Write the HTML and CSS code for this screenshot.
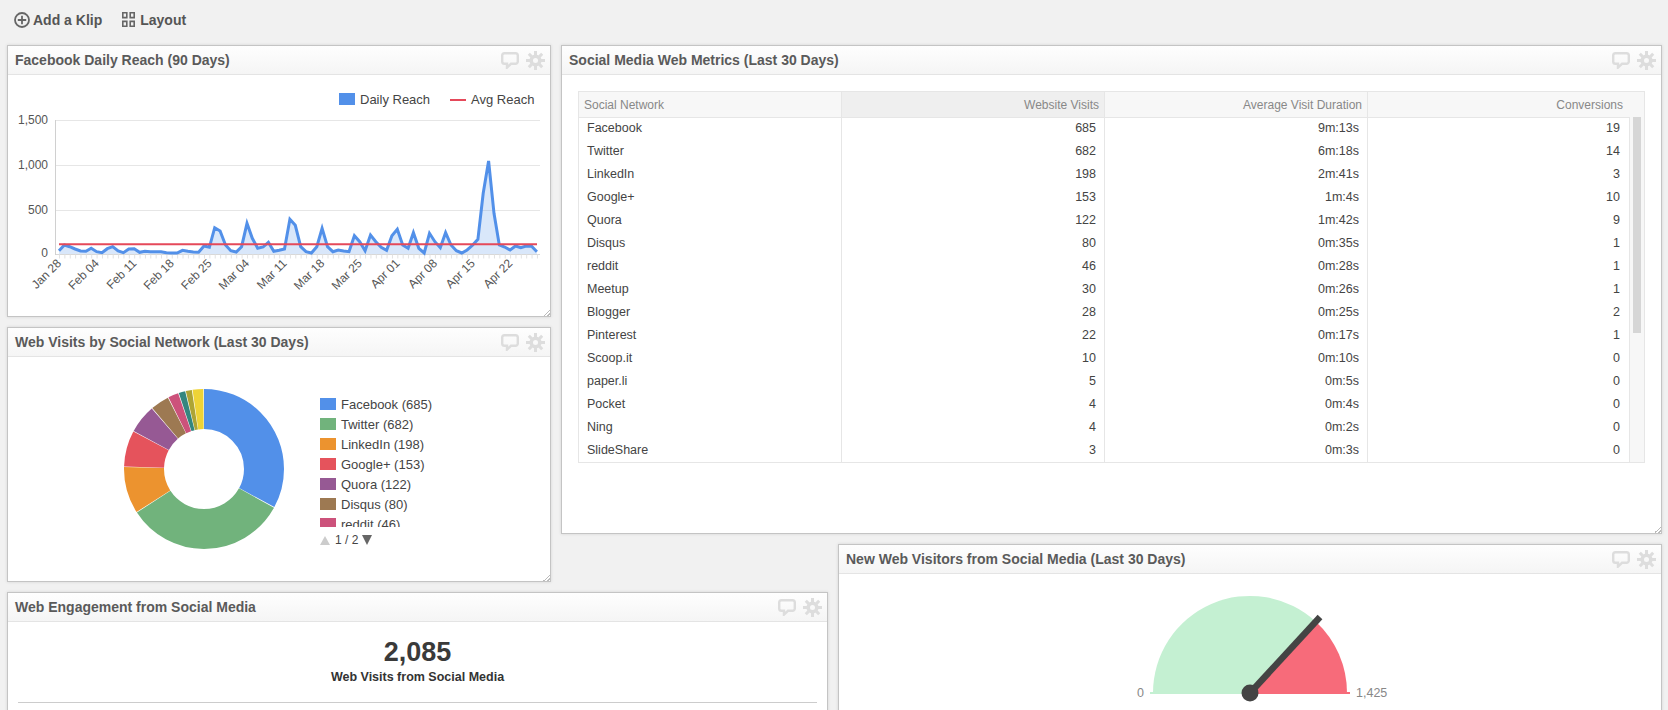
FILE: index.html
```html
<html>
<head>
  <title>Dashboard</title>
  <link rel="stylesheet" href="styles.css">
</head>
<body>
  <!-- Toolbar -->
  <div class="toolbar">
    <a class="tool">
      <svg class="tool-icon" width="16" height="16" viewBox="0 0 16 16"><circle cx="8" cy="8" r="7" fill="none" stroke="#666" stroke-width="1.800"/><path d="M8 3.800v8.400M3.800 8h8.400" stroke="#666" stroke-width="1.800"/></svg>
      Add a Klip
    </a>
    <a class="tool">
      <svg class="tool-icon" width="13" height="15" viewBox="0 0 13 15"><path d="M.8.800h4v4.800h-4zM8.200.800h4v4.800h-4zM.8 9.400h4v4.800h-4zM8.200 9.400h4v4.800h-4z" fill="none" stroke="#666" stroke-width="1.600"/></svg>
      Layout
    </a>
  </div>

  <div class="dashboard">

    <!-- Facebook reach chart -->
    <section class="klip klip-reach">
      <div class="klip-header">
        <h2>Facebook Daily Reach (90 Days)</h2>
        <svg class="klip-icon" width="18" height="17" viewBox="0 0 18 17"><path d="M3.500 1.200h11a2.300 2.300 0 0 1 2.300 2.300v6a2.300 2.300 0 0 1-2.300 2.300H10l-4 3.800v-3.800H3.500a2.300 2.300 0 0 1-2.300-2.300v-6a2.300 2.300 0 0 1 2.300-2.300z" fill="none" stroke="#ddd" stroke-width="2.400"/></svg>
        <svg class="klip-icon" width="19" height="19" viewBox="0 0 19 19"><circle cx="9.500" cy="9.500" r="4.300" fill="none" stroke="#ddd" stroke-width="3.600"/><path d="M9.500 0v19M0 9.500h19M2.800 2.800l13.400 13.400M16.200 2.800L2.800 16.200" stroke="#ddd" stroke-width="3" stroke-dasharray="4 11 4"/></svg>
      </div>
      <div class="klip-body">
        <svg class="chart" width="541" height="241" viewBox="8 75 541 241">
          <!-- legend -->
          <rect x="339" y="93" width="16" height="12" fill="#5290e9"/>
          <text class="legend-text" x="360" y="104">Daily Reach</text>
          <rect x="450" y="99" width="16" height="2" fill="#e5495a"/>
          <text class="legend-text" x="471" y="104">Avg Reach</text>

          <!-- grid -->
          <path d="M56 120.500h484M56 165.500h484M56 210.500h484" stroke="#e6e6e6" fill="none"/>
          <path d="M55.500 120v135" stroke="#d0d0d0" fill="none"/>
          <path d="M56 254.500h484" stroke="#d8d8d8" fill="none"/>
          <text class="axis-y" x="48" y="124">1,500</text>
          <text class="axis-y" x="48" y="169">1,000</text>
          <text class="axis-y" x="48" y="214">500</text>
          <text class="axis-y" x="48" y="257">0</text>
          <path stroke="#e2e2e2" stroke-dasharray="1 4.370" d="M59 256.500h480" stroke-width="4" fill="none"/>

          <!-- series -->
          <polygon fill="#5290e9" fill-opacity=".22" points="59,254 59,250.700 64.400,245 69.700,246.700 75.100,249 80.500,251 85.900,251.300 91.200,248.300 96.600,251.700 102,252.700 107.300,248.700 112.700,246.700 118.100,251 123.400,252.700 128.800,249 134.200,248.700 139.600,252.300 144.900,251.300 150.300,251.700 155.700,251.700 161,251.700 166.400,252.700 171.800,253 177.100,253 182.500,250.300 187.900,251.300 193.300,252 198.600,252.300 204,246 209.400,247.300 214.700,227.700 220.100,231 225.500,245 230.800,250.700 236.200,252 241.600,246.700 247,223.300 252.300,238.300 257.700,248.300 263.100,247 268.400,242.300 273.800,251.300 279.200,250.300 284.500,249 289.900,219.300 295.300,225.300 300.700,246.700 306,251.700 311.400,253 316.800,246.700 322.100,228.300 327.500,246.700 332.900,251.700 338.200,250 343.600,251 349,251.700 354.400,235.700 359.700,241.700 365.100,250.700 370.500,235 375.800,241.700 381.200,247.300 386.600,250.300 391.900,235.700 397.300,229.300 402.700,245 408.100,248.300 413.400,232.700 418.800,248.300 424.200,253 429.500,233.300 434.900,241.700 440.300,247.700 445.600,232.700 451,245 456.400,250.700 461.800,253 467.100,250 472.500,245.300 477.900,239.300 483.200,193.300 488.600,161 494,213.300 499.300,245 504.700,247 510.100,250 515.500,246 520.800,247.700 526.200,246 531.600,246.300 536.900,251.700 536.900,254"/>
          <polyline fill="none" stroke="#5290e9" stroke-width="3" stroke-linejoin="miter" points="59,250.700 64.400,245 69.700,246.700 75.100,249 80.500,251 85.900,251.300 91.200,248.300 96.600,251.700 102,252.700 107.300,248.700 112.700,246.700 118.100,251 123.400,252.700 128.800,249 134.200,248.700 139.600,252.300 144.900,251.300 150.300,251.700 155.700,251.700 161,251.700 166.400,252.700 171.800,253 177.100,253 182.500,250.300 187.900,251.300 193.300,252 198.600,252.300 204,246 209.400,247.300 214.700,227.700 220.100,231 225.500,245 230.800,250.700 236.200,252 241.600,246.700 247,223.300 252.300,238.300 257.700,248.300 263.100,247 268.400,242.300 273.800,251.300 279.200,250.300 284.500,249 289.900,219.300 295.300,225.300 300.700,246.700 306,251.700 311.400,253 316.800,246.700 322.100,228.300 327.500,246.700 332.900,251.700 338.200,250 343.600,251 349,251.700 354.400,235.700 359.700,241.700 365.100,250.700 370.500,235 375.800,241.700 381.200,247.300 386.600,250.300 391.900,235.700 397.300,229.300 402.700,245 408.100,248.300 413.400,232.700 418.800,248.300 424.200,253 429.500,233.300 434.900,241.700 440.300,247.700 445.600,232.700 451,245 456.400,250.700 461.800,253 467.100,250 472.500,245.300 477.900,239.300 483.200,193.300 488.600,161 494,213.300 499.300,245 504.700,247 510.100,250 515.500,246 520.800,247.700 526.200,246 531.600,246.300 536.900,251.700"/>
          <path d="M59 244.300h478" stroke="#e5495a" stroke-width="2" fill="none"/>

          <!-- date labels -->
          <text class="axis-x" transform="translate(62 264) rotate(-45)">Jan 28</text>
          <text class="axis-x" transform="translate(99.600 264) rotate(-45)">Feb 04</text>
          <text class="axis-x" transform="translate(137.200 264) rotate(-45)">Feb 11</text>
          <text class="axis-x" transform="translate(174.800 264) rotate(-45)">Feb 18</text>
          <text class="axis-x" transform="translate(212.400 264) rotate(-45)">Feb 25</text>
          <text class="axis-x" transform="translate(250 264) rotate(-45)">Mar 04</text>
          <text class="axis-x" transform="translate(287.600 264) rotate(-45)">Mar 11</text>
          <text class="axis-x" transform="translate(325.200 264) rotate(-45)">Mar 18</text>
          <text class="axis-x" transform="translate(362.800 264) rotate(-45)">Mar 25</text>
          <text class="axis-x" transform="translate(400.400 264) rotate(-45)">Apr 01</text>
          <text class="axis-x" transform="translate(438 264) rotate(-45)">Apr 08</text>
          <text class="axis-x" transform="translate(475.600 264) rotate(-45)">Apr 15</text>
          <text class="axis-x" transform="translate(513.200 264) rotate(-45)">Apr 22</text>
        </svg>
      </div>
      <span class="resize-handle"></span>
    </section>

    <!-- Visits donut -->
    <section class="klip klip-donut">
      <div class="klip-header">
        <h2>Web Visits by Social Network (Last 30 Days)</h2>
        <svg class="klip-icon" width="18" height="17" viewBox="0 0 18 17"><path d="M3.500 1.200h11a2.300 2.300 0 0 1 2.300 2.300v6a2.300 2.300 0 0 1-2.300 2.300H10l-4 3.800v-3.800H3.500a2.300 2.300 0 0 1-2.300-2.300v-6a2.300 2.300 0 0 1 2.300-2.300z" fill="none" stroke="#ddd" stroke-width="2.400"/></svg>
        <svg class="klip-icon" width="19" height="19" viewBox="0 0 19 19"><circle cx="9.500" cy="9.500" r="4.300" fill="none" stroke="#ddd" stroke-width="3.600"/><path d="M9.500 0v19M0 9.500h19M2.800 2.800l13.400 13.400M16.200 2.800L2.800 16.200" stroke="#ddd" stroke-width="3" stroke-dasharray="4 11 4"/></svg>
      </div>
      <div class="klip-body donut-body">
        <svg class="donut" width="162" height="162" viewBox="0 0 162 162">
          <g transform="rotate(-90 81 81)" fill="none" stroke-width="40">
            <circle cx="81" cy="81" r="60" pathLength="360" stroke="#5290e9" stroke-dasharray="118.500 360"/>
            <circle cx="81" cy="81" r="60" pathLength="360" stroke="#71b37c" stroke-dasharray="118 360" stroke-dashoffset="-119"/>
            <circle cx="81" cy="81" r="60" pathLength="360" stroke="#ec932f" stroke-dasharray="33.900 360" stroke-dashoffset="-237.500"/>
            <circle cx="81" cy="81" r="60" pathLength="360" stroke="#e5535c" stroke-dasharray="26.100 360" stroke-dashoffset="-271.900"/>
            <circle cx="81" cy="81" r="60" pathLength="360" stroke="#965994" stroke-dasharray="20.700 360" stroke-dashoffset="-298.500"/>
            <circle cx="81" cy="81" r="60" pathLength="360" stroke="#9d7952" stroke-dasharray="13.400 360" stroke-dashoffset="-319.700"/>
            <circle cx="81" cy="81" r="60" pathLength="360" stroke="#cc527b" stroke-dasharray="7.500 360" stroke-dashoffset="-333.600"/>
            <circle cx="81" cy="81" r="60" pathLength="360" stroke="#33867f" stroke-dasharray="4.700 360" stroke-dashoffset="-341.600"/>
            <circle cx="81" cy="81" r="60" pathLength="360" stroke="#ada434" stroke-dasharray="4.400 360" stroke-dashoffset="-346.800"/>
            <circle cx="81" cy="81" r="60" pathLength="360" stroke="#eed336" stroke-dasharray="7.800 360" stroke-dashoffset="-351.700"/>
          </g>
        </svg>
        <div class="donut-side">
          <ul class="donut-legend">
            <li><span class="swatch swatch-facebook"></span>Facebook (685)</li>
            <li><span class="swatch swatch-twitter"></span>Twitter (682)</li>
            <li><span class="swatch swatch-linkedin"></span>LinkedIn (198)</li>
            <li><span class="swatch swatch-google"></span>Google+ (153)</li>
            <li><span class="swatch swatch-quora"></span>Quora (122)</li>
            <li><span class="swatch swatch-disqus"></span>Disqus (80)</li>
            <li><span class="swatch swatch-reddit"></span>reddit (46)</li>
          </ul>
          <div class="pager">
            <span class="arrow-up"></span>
            <span>1 / 2</span>
            <span class="arrow-down"></span>
          </div>
        </div>
      </div>
      <span class="resize-handle"></span>
    </section>

    <!-- Metrics table -->
    <section class="klip klip-metrics">
      <div class="klip-header">
        <h2>Social Media Web Metrics (Last 30 Days)</h2>
        <svg class="klip-icon" width="18" height="17" viewBox="0 0 18 17"><path d="M3.500 1.200h11a2.300 2.300 0 0 1 2.300 2.300v6a2.300 2.300 0 0 1-2.300 2.300H10l-4 3.800v-3.800H3.500a2.300 2.300 0 0 1-2.300-2.300v-6a2.300 2.300 0 0 1 2.300-2.300z" fill="none" stroke="#ddd" stroke-width="2.400"/></svg>
        <svg class="klip-icon" width="19" height="19" viewBox="0 0 19 19"><circle cx="9.500" cy="9.500" r="4.300" fill="none" stroke="#ddd" stroke-width="3.600"/><path d="M9.500 0v19M0 9.500h19M2.800 2.800l13.400 13.400M16.200 2.800L2.800 16.200" stroke="#ddd" stroke-width="3" stroke-dasharray="4 11 4"/></svg>
      </div>
      <div class="klip-body metrics-body">
        <div class="table-wrap">
          <table class="metrics">
            <thead>
              <tr>
                <th class="col-name">Social Network</th>
                <th class="col-visits sorted">Website Visits</th>
                <th class="col-duration">Average Visit Duration</th>
                <th class="col-conv">Conversions</th>
              </tr>
            </thead>
            <tbody>
              <tr><td>Facebook</td><td>685</td><td>9m:13s</td><td>19</td></tr>
              <tr><td>Twitter</td><td>682</td><td>6m:18s</td><td>14</td></tr>
              <tr><td>LinkedIn</td><td>198</td><td>2m:41s</td><td>3</td></tr>
              <tr><td>Google+</td><td>153</td><td>1m:4s</td><td>10</td></tr>
              <tr><td>Quora</td><td>122</td><td>1m:42s</td><td>9</td></tr>
              <tr><td>Disqus</td><td>80</td><td>0m:35s</td><td>1</td></tr>
              <tr><td>reddit</td><td>46</td><td>0m:28s</td><td>1</td></tr>
              <tr><td>Meetup</td><td>30</td><td>0m:26s</td><td>1</td></tr>
              <tr><td>Blogger</td><td>28</td><td>0m:25s</td><td>2</td></tr>
              <tr><td>Pinterest</td><td>22</td><td>0m:17s</td><td>1</td></tr>
              <tr><td>Scoop.it</td><td>10</td><td>0m:10s</td><td>0</td></tr>
              <tr><td>paper.li</td><td>5</td><td>0m:5s</td><td>0</td></tr>
              <tr><td>Pocket</td><td>4</td><td>0m:4s</td><td>0</td></tr>
              <tr><td>Ning</td><td>4</td><td>0m:2s</td><td>0</td></tr>
              <tr><td>SlideShare</td><td>3</td><td>0m:3s</td><td>0</td></tr>
            </tbody>
          </table>
          <div class="scroll-track"><div class="scroll-thumb"></div></div>
        </div>
      </div>
      <span class="resize-handle"></span>
    </section>

    <!-- Gauge -->
    <section class="klip klip-gauge">
      <div class="klip-header">
        <h2>New Web Visitors from Social Media (Last 30 Days)</h2>
        <svg class="klip-icon" width="18" height="17" viewBox="0 0 18 17"><path d="M3.500 1.200h11a2.300 2.300 0 0 1 2.300 2.300v6a2.300 2.300 0 0 1-2.300 2.300H10l-4 3.800v-3.800H3.500a2.300 2.300 0 0 1-2.300-2.300v-6a2.300 2.300 0 0 1 2.300-2.300z" fill="none" stroke="#ddd" stroke-width="2.400"/></svg>
        <svg class="klip-icon" width="19" height="19" viewBox="0 0 19 19"><circle cx="9.500" cy="9.500" r="4.300" fill="none" stroke="#ddd" stroke-width="3.600"/><path d="M9.500 0v19M0 9.500h19M2.800 2.800l13.400 13.400M16.200 2.800L2.800 16.200" stroke="#ddd" stroke-width="3" stroke-dasharray="4 11 4"/></svg>
      </div>
      <div class="klip-body gauge-body">
        <svg class="gauge" width="300" height="130" viewBox="1100 585 300 130">
          <path d="M1153 693A97 97 0 0 1 1316.200 622L1250 693z" fill="#c4f0d2"/>
          <path d="M1316.200 622A97 97 0 0 1 1347 693H1250z" fill="#f76b7a"/>
          <rect x="1150" y="692" width="100" height="2" fill="#c4f0d2"/>
          <rect x="1250" y="692" width="100" height="2" fill="#f76b7a"/>
          <path d="M1250 693L1320 617" stroke="#444" stroke-width="6.500" fill="none"/>
          <circle cx="1250" cy="693" r="8.500" fill="#444"/>
          <text class="gauge-label" x="1144" y="697" text-anchor="end">0</text>
          <text class="gauge-label" x="1356" y="697">1,425</text>
        </svg>
      </div>
    </section>

    <!-- Engagement numbers -->
    <section class="klip klip-engage">
      <div class="klip-header">
        <h2>Web Engagement from Social Media</h2>
        <svg class="klip-icon" width="18" height="17" viewBox="0 0 18 17"><path d="M3.500 1.200h11a2.300 2.300 0 0 1 2.300 2.300v6a2.300 2.300 0 0 1-2.300 2.300H10l-4 3.800v-3.800H3.500a2.300 2.300 0 0 1-2.300-2.300v-6a2.300 2.300 0 0 1 2.300-2.300z" fill="none" stroke="#ddd" stroke-width="2.400"/></svg>
        <svg class="klip-icon" width="19" height="19" viewBox="0 0 19 19"><circle cx="9.500" cy="9.500" r="4.300" fill="none" stroke="#ddd" stroke-width="3.600"/><path d="M9.500 0v19M0 9.500h19M2.800 2.800l13.400 13.400M16.200 2.800L2.800 16.200" stroke="#ddd" stroke-width="3" stroke-dasharray="4 11 4"/></svg>
      </div>
      <div class="klip-body engage-body">
        <div class="big-number">2,085</div>
        <div class="big-label">Web Visits from Social Media</div>
        <hr class="engage-rule">
      </div>
    </section>

  </div>
</body>
</html>
```

FILE: styles.css
```css
/* Page */
html, body {
  height: 100%;
}
body {
  margin: 0;
  background-color: #f1f1f1;
  font-family: "Liberation Sans", Arial, sans-serif;
  color: #444;
  overflow: hidden;
}

/* Toolbar */
.toolbar {
  display: flex;
  align-items: center;
  gap: 20px;
  height: 45px;
  padding: 0 0 6px 14px;
  box-sizing: border-box;
}
.tool {
  display: flex;
  align-items: center;
  gap: 3px;
  font-size: 14px;
  font-weight: bold;
  color: #555;
}
.tool-icon {
  flex: none;
}
.tool + .tool {
  gap: 5px;
}

/* Dashboard grid */
.dashboard {
  display: grid;
  grid-template-columns: 544px 267px 824px;
  grid-template-rows: 272px 207px 38px 200px;
  column-gap: 10px;
  row-gap: 10px;
  padding-left: 7px;
}
.klip-reach { grid-column: 1; grid-row: 1; }
.klip-donut { grid-column: 1; grid-row: 2 / span 2; }
.klip-metrics { grid-column: 2 / span 2; grid-row: 1 / span 2; }
.klip-gauge { grid-column: 3; grid-row: 3 / span 2; }
.klip-engage { grid-column: 1 / span 2; grid-row: 4; }

/* Klip panels */
.klip {
  position: relative;
  display: flex;
  flex-direction: column;
  background-color: #fff;
  border: 1px solid #c4c4c4;
  box-shadow: 0 0 3px rgba(0, 0, 0, 0.12);
  box-sizing: border-box;
  min-width: 0;
  min-height: 0;
}
.klip-header {
  display: flex;
  align-items: center;
  gap: 7px;
  flex: none;
  height: 28px;
  padding: 0 5px 0 7px;
  background: linear-gradient(#fefefe, #f5f5f5);
  border-bottom: 1px solid #e4e4e4;
}
.klip-header h2 {
  flex: 1;
  margin: 0;
  font-size: 14px;
  font-weight: bold;
  color: #5a5a5a;
  white-space: nowrap;
}
.klip-icon {
  flex: none;
}
.klip-body {
  flex: 1;
  min-height: 0;
}
.resize-handle {
  position: absolute;
  right: 0;
  bottom: 0;
  width: 7px;
  height: 7px;
  background: linear-gradient(135deg, transparent 50%, #bbb 50%, #bbb 60%, transparent 60%, transparent 76%, #bbb 76%, #bbb 86%, transparent 86%);
}

/* Reach chart */
.chart {
  display: block;
}
.legend-text {
  font-size: 13px;
  fill: #444;
}
.axis-y {
  font-size: 12px;
  fill: #555;
  text-anchor: end;
}
.axis-x {
  font-size: 12px;
  fill: #555;
  text-anchor: end;
}

/* Donut */
.donut-body {
  display: flex;
  align-items: flex-start;
}
.donut {
  flex: none;
  margin: 31px 0 0 115px;
}
.donut-side {
  margin: 37px 0 0 35px;
  font-size: 13px;
  color: #444;
}
.donut-legend {
  list-style: none;
  margin: 0;
  padding: 0;
  height: 133px;
  overflow: hidden;
}
.donut-legend li {
  display: flex;
  align-items: center;
  gap: 5px;
  height: 20px;
}
.swatch {
  display: block;
  width: 16px;
  height: 12px;
}
.swatch-facebook { background-color: #5290e9; }
.swatch-twitter { background-color: #71b37c; }
.swatch-linkedin { background-color: #ec932f; }
.swatch-google { background-color: #e5535c; }
.swatch-quora { background-color: #965994; }
.swatch-disqus { background-color: #9d7952; }
.swatch-reddit { background-color: #cc527b; }
.pager {
  display: flex;
  align-items: center;
  gap: 5px;
  margin-top: 6px;
  font-size: 12px;
}
.arrow-up {
  border-left: 5px solid transparent;
  border-right: 5px solid transparent;
  border-bottom: 9px solid #ccc;
}
.arrow-down {
  border-left: 5px solid transparent;
  border-right: 5px solid transparent;
  border-top: 10px solid #666;
  margin-left: -1px;
}

/* Metrics table */
.metrics-body {
  padding: 16px 16px 0 16px;
}
.table-wrap {
  position: relative;
}
.metrics {
  width: 100%;
  table-layout: fixed;
  border-collapse: collapse;
  font-size: 12.5px;
  border: 1px solid #e6e6e6;
}
.metrics th {
  height: 26px;
  padding: 0 5px;
  font-size: 12px;
  font-weight: normal;
  color: #888;
  text-align: right;
  background-color: #f7f7f7;
  border: 1px solid #e6e6e6;
  box-sizing: border-box;
}
.metrics th.sorted {
  background-color: #efefef;
}
.metrics th.col-name {
  text-align: left;
}
.metrics .col-name { width: 263px; }
.metrics .col-visits { width: 263px; }
.metrics .col-duration { width: 263px; }
.metrics th.col-conv {
  padding-right: 21px;
}
.metrics td {
  height: 23px;
  padding: 0 8px 2px 8px;
  color: #444;
  text-align: right;
  border-left: 1px solid #e6e6e6;
  border-right: 1px solid #e6e6e6;
  box-sizing: border-box;
}
.metrics td:first-child {
  text-align: left;
}
.metrics td:last-child {
  padding-right: 24px;
}
.scroll-track {
  position: absolute;
  top: 26px;
  right: 1px;
  bottom: 1px;
  width: 15px;
  padding: 0 3px;
  box-sizing: border-box;
  background-color: #f7f7f7;
  border-left: 1px solid #e6e6e6;
}
.scroll-thumb {
  height: 216px;
  background-color: #d6d6d6;
}

/* Gauge */
.gauge {
  display: block;
  margin: 11px 0 0 261px;
}
.gauge-label {
  font-size: 12.5px;
  fill: #888;
}

/* Engagement numbers */
.engage-body {
  text-align: center;
  padding: 14px 10px 0 10px;
}
.big-number {
  font-size: 27px;
  font-weight: bold;
  line-height: 33px;
  color: #3a3a3a;
}
.big-label {
  font-size: 12.5px;
  font-weight: bold;
  line-height: 16px;
  color: #333;
}
.engage-rule {
  margin: 17px 0 0 0;
  border: 0;
  border-top: 1px solid #ccc;
}
```
